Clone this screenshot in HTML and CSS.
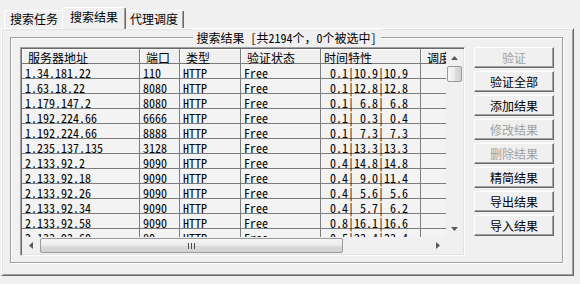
FILE: index.html
```html
<html lang="zh-CN">

<head>
    <meta charset="UTF-8">
    <title>搜索结果</title>
    <link rel="stylesheet" href="styles.css">
</head>

<body>

    <div class="tabstrip">
        <div class="tab">搜索任务</div>
        <div class="tab active">搜索结果</div>
        <div class="tab">代理调度</div>
    </div>

    <div class="panel">
        <div class="group">
            <span class="group-title">搜索结果 [共2194个，0个被选中]</span>

            <div class="listview">
                <div class="lv-body">
                    <div class="row head">
                        <div class="cell">服务器地址</div>
                        <div class="cell">端口</div>
                        <div class="cell">类型</div>
                        <div class="cell">验证状态</div>
                        <div class="cell tight">时间特性</div>
                        <div class="cell">调度</div>
                    </div>
                    <div class="row"><div class="cell">1.34.181.22</div><div class="cell">110</div><div class="cell">HTTP</div><div class="cell">Free</div><div class="cell"> 0.1|10.9|10.9</div><div class="cell"></div></div>
                    <div class="row"><div class="cell">1.63.18.22</div><div class="cell">8080</div><div class="cell">HTTP</div><div class="cell">Free</div><div class="cell"> 0.1|12.8|12.8</div><div class="cell"></div></div>
                    <div class="row"><div class="cell">1.179.147.2</div><div class="cell">8080</div><div class="cell">HTTP</div><div class="cell">Free</div><div class="cell"> 0.1| 6.8| 6.8</div><div class="cell"></div></div>
                    <div class="row"><div class="cell">1.192.224.66</div><div class="cell">6666</div><div class="cell">HTTP</div><div class="cell">Free</div><div class="cell"> 0.1| 0.3| 0.4</div><div class="cell"></div></div>
                    <div class="row"><div class="cell">1.192.224.66</div><div class="cell">8888</div><div class="cell">HTTP</div><div class="cell">Free</div><div class="cell"> 0.1| 7.3| 7.3</div><div class="cell"></div></div>
                    <div class="row"><div class="cell">1.235.137.135</div><div class="cell">3128</div><div class="cell">HTTP</div><div class="cell">Free</div><div class="cell"> 0.1|13.3|13.3</div><div class="cell"></div></div>
                    <div class="row"><div class="cell">2.133.92.2</div><div class="cell">9090</div><div class="cell">HTTP</div><div class="cell">Free</div><div class="cell"> 0.4|14.8|14.8</div><div class="cell"></div></div>
                    <div class="row"><div class="cell">2.133.92.18</div><div class="cell">9090</div><div class="cell">HTTP</div><div class="cell">Free</div><div class="cell"> 0.4| 9.0|11.4</div><div class="cell"></div></div>
                    <div class="row"><div class="cell">2.133.92.26</div><div class="cell">9090</div><div class="cell">HTTP</div><div class="cell">Free</div><div class="cell"> 0.4| 5.6| 5.6</div><div class="cell"></div></div>
                    <div class="row"><div class="cell">2.133.92.34</div><div class="cell">9090</div><div class="cell">HTTP</div><div class="cell">Free</div><div class="cell"> 0.4| 5.7| 6.2</div><div class="cell"></div></div>
                    <div class="row"><div class="cell">2.133.92.58</div><div class="cell">9090</div><div class="cell">HTTP</div><div class="cell">Free</div><div class="cell"> 0.8|16.1|16.6</div><div class="cell"></div></div>
                    <div class="row"><div class="cell">2.133.92.60</div><div class="cell">80</div><div class="cell">HTTP</div><div class="cell">Free</div><div class="cell"> 0.5|23.4|23.4</div><div class="cell"></div></div>
                </div>

                <div class="vscroll">
                    <div class="arrow">
                        <svg width="7" height="4" viewBox="0 0 7 4"><polygon points="3.5,0 7,4 0,4" fill="#5a5a5a"/></svg>
                    </div>
                    <div class="thumb-v"></div>
                    <div class="track"></div>
                    <div class="arrow">
                        <svg width="7" height="4" viewBox="0 0 7 4"><polygon points="0,0 7,0 3.5,4" fill="#5a5a5a"/></svg>
                    </div>
                </div>

                <div class="hscroll">
                    <div class="arrow">
                        <svg width="4" height="7" viewBox="0 0 4 7"><polygon points="4,0 4,7 0,3.5" fill="#5a5a5a"/></svg>
                    </div>
                    <div class="thumb-h"><span class="grip"></span></div>
                    <div class="track"></div>
                    <div class="arrow">
                        <svg width="4" height="7" viewBox="0 0 4 7"><polygon points="0,0 4,3.5 0,7" fill="#5a5a5a"/></svg>
                    </div>
                </div>

                <div class="corner"></div>
            </div>

            <div class="buttons">
                <button class="btn" type="button" disabled>验证</button>
                <button class="btn" type="button">验证全部</button>
                <button class="btn" type="button">添加结果</button>
                <button class="btn" type="button" disabled>修改结果</button>
                <button class="btn" type="button" disabled>删除结果</button>
                <button class="btn" type="button">精简结果</button>
                <button class="btn" type="button">导出结果</button>
                <button class="btn" type="button">导入结果</button>
            </div>
        </div>
    </div>

</body>

</html>
```

FILE: styles.css
```css
*,
*::after {
    box-sizing: border-box;
    margin: 0;
    padding: 0;
}

html,
body {
    width: 580px;
    height: 284px;
    overflow: hidden;
}

body {
    background: #f0f0f0;
    color: #000;
    font-family: "Noto Sans Mono CJK SC", "Noto Sans CJK SC", sans-serif;
    font-size: 12px;
}

/* tabs */

.tabstrip {
    position: relative;
    z-index: 1;
    display: flex;
    align-items: flex-start;
    height: 28px;
    padding: 10px 0 0 4px;
}

.tab {
    width: 60px;
    height: 18px;
    line-height: 16px;
    text-align: center;
    border-top: 1px solid #fff;
    border-left: 1px solid #fff;
    border-right: 1px solid #696969;
    border-radius: 2px 2px 0 0;
    box-shadow: inset -1px 0 #a0a0a0;
}

.tab.active {
    position: relative;
    z-index: 2;
    width: 64px;
    height: 22px;
    margin: -3px -2px 0;
    line-height: 18px;
    background: #f0f0f0;
}

/* tab page */

.panel {
    width: 573px;
    height: 248px;
    margin-left: 1px;
    padding: 8px 0 0 8px;
    border: 1px solid;
    border-color: #fff #696969 #696969 #fff;
    box-shadow: inset 1px 1px #e3e3e3, inset -1px -1px #a0a0a0;
}

.group {
    position: relative;
    display: flex;
    gap: 9px;
    width: 553px;
    height: 226px;
    padding: 9px 0 0 9px;
    border: 1px solid #a0a0a0;
    box-shadow: inset 1px 1px #fff, 1px 1px #fff;
}

.group-title {
    position: absolute;
    top: -9px;
    left: 50%;
    transform: translateX(-50%);
    padding: 0 4px;
    line-height: 17px;
    white-space: nowrap;
    background: #f0f0f0;
}

/* list */

.listview {
    display: grid;
    grid-template-columns: 424px 17px;
    grid-template-rows: 188px 17px;
    width: 445px;
    height: 209px;
    padding: 1px;
    border: 1px solid;
    border-color: #a0a0a0 #fff #fff #a0a0a0;
    box-shadow: inset 1px 1px #696969, inset -1px -1px #e3e3e3;
}

.lv-body {
    overflow: hidden;
    background: #f3f3f3;
}

.row {
    display: grid;
    grid-template-columns: 118px 40px 61px 80px 100px 60px;
    width: 459px;
    height: 15px;
}

.cell {
    height: 15px;
    padding-left: 3px;
    line-height: 17px;
    white-space: pre;
    border-right: 1px solid #7c7c7c;
    border-bottom: 1px solid #7c7c7c;
}

.head .cell {
    padding-left: 6px;
    line-height: 18px;
    background: #f0f0f0;
    border-color: #7a7a7a;
    box-shadow: inset 1px 1px #fff;
}

.head .cell.tight {
    padding-left: 3px;
}

/* scrollbars */

.vscroll,
.hscroll,
.corner {
    position: relative;
    display: flex;
    background: #f0f0f0;
}

.vscroll {
    flex-direction: column;
}

.arrow {
    display: flex;
    align-items: center;
    justify-content: center;
    flex: 0 0 17px;
}

.track {
    flex: 1;
}

.thumb-v {
    flex: 0 0 16px;
    margin: 0 1px;
    border: 1px solid #9a9a9a;
    border-radius: 2px;
    background: linear-gradient(90deg, #f6f6f6, #e9e9e9 50%, #dcdcdc 51%, #d2d2d2);
}

.hscroll {
    align-items: center;
}

.thumb-h {
    display: flex;
    align-items: center;
    justify-content: center;
    width: 303px;
    height: 15px;
    margin-left: 1px;
    border: 1px solid #9a9a9a;
    border-radius: 2px;
    background: linear-gradient(#f6f6f6, #e9e9e9 50%, #dcdcdc 51%, #d2d2d2);
}

.grip {
    width: 7px;
    height: 6px;
    background: repeating-linear-gradient(90deg, #4a4a4a 0 1px, transparent 1px 3px);
}

/* buttons */

.buttons {
    display: flex;
    flex-direction: column;
    gap: 3px;
}

.btn {
    width: 80px;
    height: 21px;
    font: inherit;
    color: #000;
    background: #f0f0f0;
    border: 1px solid;
    border-color: #fff #696969 #696969 #fff;
    box-shadow: inset -1px -1px #a0a0a0;
}

.btn:disabled {
    color: #a0a0a0;
}
```
